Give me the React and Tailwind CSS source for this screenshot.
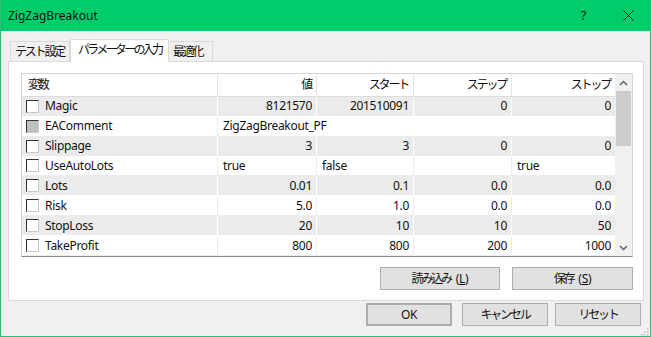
import React from 'react';

const font = { fontFamily: '"Noto Sans", "Noto Sans CJK JP", sans-serif' };

// Japanese labels: narrow them to match the condensed UI font
const jp = 'text-[12px] tracking-[-2.2px] whitespace-nowrap';

const rows = [
  { name: 'Magic', cells: ['8121570', '201510091', '0', '0'] },
  { name: 'EAComment', span: 'ZigZagBreakout_PF', disabled: true },
  { name: 'Slippage', cells: ['3', '3', '0', '0'] },
  { name: 'UseAutoLots', cells: ['true', 'false', '', 'true'], left: true },
  { name: 'Lots', cells: ['0.01', '0.1', '0.0', '0.0'] },
  { name: 'Risk', cells: ['5.0', '1.0', '0.0', '0.0'] },
  { name: 'StopLoss', cells: ['20', '10', '10', '50'] },
  { name: 'TakeProfit', cells: ['800', '800', '200', '1000'] },
];

const cols = 'grid grid-cols-[196px_99px_97px_98px_103px]';

function Check({ disabled }) {
  return (
    <span
      className={`w-[13px] h-[13px] shrink-0 border border-t-[#333] border-l-[#333] border-r-[#c8c8c8] border-b-[#c8c8c8] ${
        disabled ? 'bg-[#bfbfbf] border-t-[#6d6d6d] border-l-[#6d6d6d]' : 'bg-white'
      }`}
    />
  );
}

function Row({ row, idx }) {
  const gray = idx % 2 === 0;
  const bg = gray ? 'bg-[#ebebeb]' : 'bg-white';
  const line = gray ? 'border-white' : 'border-[#ececec]';
  return (
    <div className={`${cols} h-[20px] ${bg} border-b ${line}`}>
      <div className={`flex items-center gap-[6px] pl-[4px] border-r ${line}`}>
        <Check disabled={row.disabled} />
        <span>{row.name}</span>
      </div>
      {row.span ? (
        <div className="col-span-4 flex items-center pl-[5px]">{row.span}</div>
      ) : (
        row.cells.map((c, i) => (
          <div
            key={i}
            className={`flex items-center px-[4px] ${row.left ? 'justify-start pl-[5px]' : 'justify-end'} ${
              i < 3 ? `border-r ${line}` : ''
            }`}
          >
            {c}
          </div>
        ))
      )}
    </div>
  );
}

function Btn({ children, className = '' }) {
  return (
    <button
      className={`h-[23px] flex items-center justify-center bg-[#e1e1e1] border border-[#adadad] text-[12px] text-[#111] ${className}`}
    >
      {children}
    </button>
  );
}

export default function App() {
  return (
    <div
      className="w-[651px] h-[337px] flex flex-col bg-[#f0f0f0] border-x border-b border-[#2fbf76] text-[12px] tracking-[-0.3px] text-[#111] overflow-hidden"
      style={font}
    >
      {/* title bar */}
      <div className="h-[31px] shrink-0 bg-[#00cc6a] flex items-center pl-[7px] text-[#111]">
        <span className="text-[12px] tracking-normal">ZigZagBreakout</span>
        <span className="ml-auto mr-[37px] text-[13px]">?</span>
        <svg width="11" height="11" viewBox="0 0 11 11" className="mr-[16px]">
          <path d="M0.5 0.5 L10.5 10.5 M10.5 0.5 L0.5 10.5" stroke="#111" strokeWidth="1" />
        </svg>
      </div>

      {/* tabs */}
      <div className="flex items-end h-[22px] mt-[8px] pl-[9px]">
        <div className={`h-[20px] w-[60px] flex items-center pl-[4px] border border-b-0 border-[#d9d9d9] bg-[#f0f0f0] ${jp}`}>
          テスト設定
        </div>
        <div className="h-[23px] w-[99px] flex items-center pl-[7px] border border-b-0 border-[#d9d9d9] bg-white relative z-10 -mb-px pb-[2px] text-[12px] tracking-[-2.7px] whitespace-nowrap">
          パラメーターの入力
        </div>
        <div className={`h-[20px] w-[44px] flex items-center pl-[4px] border border-b-0 border-l-0 border-[#d9d9d9] bg-[#f0f0f0] ${jp}`}>
          最適化
        </div>
      </div>

      {/* panel */}
      <div className="ml-[7px] w-[636px] h-[240px] bg-white border border-[#d9d9d9] pl-[12px] pt-[11px]">
        <div className="w-[612px] h-[184px] border border-[#8a8a8a] border-t-[#d5d5d5] border-l-[#d5d5d5] border-r-[#d5d5d5] flex">
          <div className="w-[593px] flex flex-col">
            <div className={`${cols} h-[23px] bg-white border-b border-[#dcdcdc] ${jp}`}>
              <div className="flex items-center pl-[6px] border-r border-[#e5e5e5]">変数</div>
              <div className="flex items-center justify-end pr-[5px] border-r border-[#e5e5e5]">値</div>
              <div className="flex items-center justify-end pr-[5px] border-r border-[#e5e5e5]">スタート</div>
              <div className="flex items-center justify-end pr-[5px] border-r border-[#e5e5e5]">ステップ</div>
              <div className="flex items-center justify-end pr-[5px]">ストップ</div>
            </div>
            {rows.map((r, i) => (
              <Row key={r.name} row={r} idx={i} />
            ))}
          </div>
          {/* scrollbar */}
          <div className="w-[17px] flex flex-col bg-[#f0f0f0]">
            <div className="h-[17px] flex items-center justify-center">
              <svg width="9" height="6" viewBox="0 0 9 6">
                <path d="M1 5 L4.5 1.5 L8 5" fill="none" stroke="#606060" strokeWidth="1.5" />
              </svg>
            </div>
            <div className="mx-[1px] h-[55px] bg-[#cdcdcd]" />
            <div className="flex-1" />
            <div className="h-[17px] flex items-center justify-center">
              <svg width="9" height="6" viewBox="0 0 9 6">
                <path d="M1 1 L4.5 4.5 L8 1" fill="none" stroke="#606060" strokeWidth="1.5" />
              </svg>
            </div>
          </div>
        </div>

        <div className="w-[612px] flex justify-end gap-[12px] mt-[10px]">
          <Btn className="w-[120px]">
            <span className={jp}>読み込み</span>
            <span className="ml-[5px]">(<span className="underline">L</span>)</span>
          </Btn>
          <Btn className="w-[121px]">
            <span className={jp}>保存</span>
            <span className="ml-[5px]">(<span className="underline">S</span>)</span>
          </Btn>
        </div>
      </div>

      {/* dialog buttons */}
      <div className="flex items-start mt-[2px] pl-[365px]">
        <Btn className="w-[86px] border-2 border-[#0078d7]">OK</Btn>
        <Btn className="w-[86px] ml-[10px]">
          <span className={jp}>キャンセル</span>
        </Btn>
        <Btn className="w-[86px] ml-[7px]">
          <span className={jp}>リセット</span>
        </Btn>
        <svg width="8" height="8" viewBox="0 0 8 8" className="self-end ml-auto mr-[1px] mb-[-10px]">
          <rect x="6" y="0" width="1.5" height="1.5" fill="#bcbcbc" />
          <rect x="3" y="3" width="1.5" height="1.5" fill="#bcbcbc" />
          <rect x="6" y="3" width="1.5" height="1.5" fill="#bcbcbc" />
          <rect x="0" y="6" width="1.5" height="1.5" fill="#bcbcbc" />
          <rect x="3" y="6" width="1.5" height="1.5" fill="#bcbcbc" />
          <rect x="6" y="6" width="1.5" height="1.5" fill="#bcbcbc" />
        </svg>
      </div>
    </div>
  );
}
